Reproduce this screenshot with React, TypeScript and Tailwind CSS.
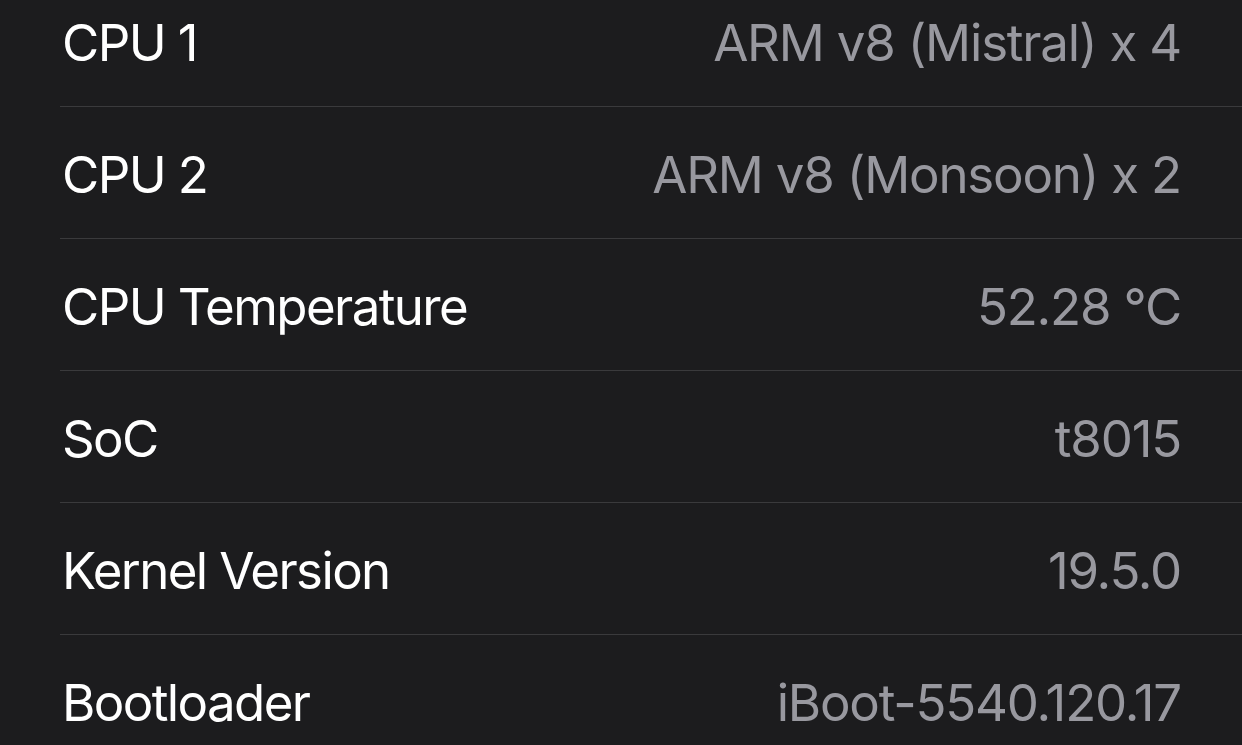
const rows: { label: string; value: string }[] = [
  { label: "CPU 1", value: "ARM v8 (Mistral) x 4" },
  { label: "CPU 2", value: "ARM v8 (Monsoon) x 2" },
  { label: "CPU Temperature", value: "52.28 °C" },
  { label: "SoC", value: "t8015" },
  { label: "Kernel Version", value: "19.5.0" },
  { label: "Bootloader", value: "iBoot-5540.120.17" },
];

export default function App() {
  return (
    <div
      className="h-[745px] w-full overflow-hidden bg-[#1c1c1e] antialiased"
      style={{ fontFamily: "Inter, 'Noto Sans', sans-serif" }}
    >
      <div className="-mt-[25px] pl-[60px]">
        {rows.map((row) => (
          <div
            key={row.label}
            className="flex h-[132px] items-center justify-between border-b border-[#3a3a3c] pt-[4px] pr-[61px] text-[51px] leading-none"
          >
            <span className="pl-[2px] tracking-[-1.6px] text-white">{row.label}</span>
            <span className="tracking-[-1.2px] text-[#98989f]">{row.value}</span>
          </div>
        ))}
      </div>
    </div>
  );
}
